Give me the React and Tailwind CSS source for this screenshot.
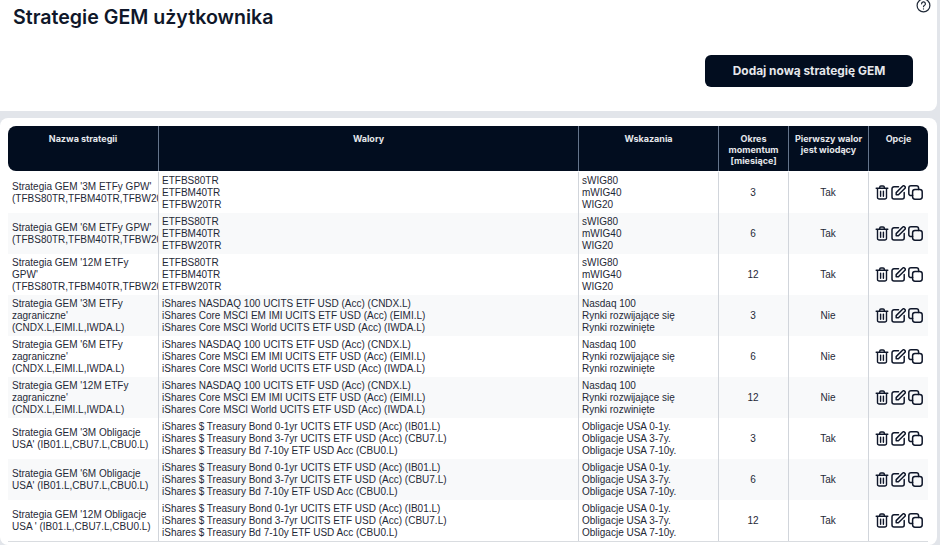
const gpw = ["ETFBS80TR", "ETFBM40TR", "ETFBW20TR"];
const gpwI = ["sWIG80", "mWIG40", "WIG20"];
const zag = ["iShares NASDAQ 100 UCITS ETF USD (Acc) (CNDX.L)", "iShares Core MSCI EM IMI UCITS ETF USD (Acc) (EIMI.L)", "iShares Core MSCI World UCITS ETF USD (Acc) (IWDA.L)"];
const zagI = ["Nasdaq 100", "Rynki rozwijające się", "Rynki rozwinięte"];
const obl = ["iShares $ Treasury Bond 0-1yr UCITS ETF USD (Acc) (IB01.L)", "iShares $ Treasury Bond 3-7yr UCITS ETF USD (Acc) (CBU7.L)", "iShares $ Treasury Bd 7-10y ETF USD Acc (CBU0.L)"];
const oblI = ["Obligacje USA 0-1y.", "Obligacje USA 3-7y.", "Obligacje USA 7-10y."];

const rows = [
  ["Strategia GEM '3M ETFy GPW' (TFBS80TR,TFBM40TR,TFBW20TR)", gpw, gpwI, 3, "Tak"],
  ["Strategia GEM '6M ETFy GPW' (TFBS80TR,TFBM40TR,TFBW20TR)", gpw, gpwI, 6, "Tak"],
  ["Strategia GEM '12M ETFy GPW' (TFBS80TR,TFBM40TR,TFBW20TR)", gpw, gpwI, 12, "Tak"],
  ["Strategia GEM '3M ETFy zagraniczne' (CNDX.L,EIMI.L,IWDA.L)", zag, zagI, 3, "Nie"],
  ["Strategia GEM '6M ETFy zagraniczne' (CNDX.L,EIMI.L,IWDA.L)", zag, zagI, 6, "Nie"],
  ["Strategia GEM '12M ETFy zagraniczne' (CNDX.L,EIMI.L,IWDA.L)", zag, zagI, 12, "Nie"],
  ["Strategia GEM '3M Obligacje USA' (IB01.L,CBU7.L,CBU0.L)", obl, oblI, 3, "Tak"],
  ["Strategia GEM '6M Obligacje USA' (IB01.L,CBU7.L,CBU0.L)", obl, oblI, 6, "Tak"],
  ["Strategia GEM '12M Obligacje USA ' (IB01.L,CBU7.L,CBU0.L)", obl, oblI, 12, "Tak"],
];

function Trash() {
  return (
    <svg width="14" height="15" viewBox="0 0 14 16" fill="none" stroke="#0f172a" strokeWidth="1.5" strokeLinecap="round" strokeLinejoin="round">
      <path d="M0.8 3.4h12.4M4.6 3.4V2.2a1.2 1.2 0 0 1 1.2-1.2h2.4a1.2 1.2 0 0 1 1.2 1.2v1.2M2.2 3.4v9.8A1.8 1.8 0 0 0 4 15h6a1.8 1.8 0 0 0 1.8-1.8V3.4M5.5 6.5v5.5M8.5 6.5v5.5" />
    </svg>
  );
}
function Edit() {
  return (
    <svg width="15" height="15" viewBox="0 0 15 15" fill="none" stroke="#0f172a" strokeWidth="1.5" strokeLinecap="round" strokeLinejoin="round">
      <path d="M7.5 1.8H3a2 2 0 0 0-2 2V12a2 2 0 0 0 2 2h8.2a2 2 0 0 0 2-2V7.5M5.2 7.6v2.2h2.2l6.6-6.6a1.1 1.1 0 0 0 0-1.6l-.6-.6a1.1 1.1 0 0 0-1.6 0z" />
    </svg>
  );
}
function Copy() {
  return (
    <svg width="15" height="15" viewBox="0 0 15 15" fill="none" stroke="#0f172a" strokeWidth="1.5" strokeLinecap="round" strokeLinejoin="round">
      <rect x="4.6" y="4.4" width="9.6" height="9.8" rx="2.4" />
      <path d="M4.6 10.6H3A2.2 2.2 0 0 1 .8 8.4V3A2.2 2.2 0 0 1 3 .8h5.4a2.2 2.2 0 0 1 2.2 2.2v1.4" />
    </svg>
  );
}

const th = "border-l border-[#64748b] px-1 pt-[6.5px] align-top font-bold text-[9px] leading-[11px] text-[#e5e7eb]";
const td = "border-l border-[#d1d5db] pl-[3px] pr-1 align-middle";

export default function App() {
  return (
    <div className="h-[545px] w-[940px] overflow-hidden bg-[#e2e5ea] font-['Liberation_Sans',sans-serif] text-[#1f2937]">
      <section className="relative flex h-[111px] w-[937px] flex-col rounded-br-lg bg-white pl-[13px] pr-6">
        <h1 className="mt-[4px] font-['Inter',sans-serif] text-[19.6px] font-semibold leading-[26px] text-[#0f172a]">Strategie GEM użytkownika</h1>
        <button className="ml-auto mt-[25px] h-[32px] w-[208px] rounded-md bg-[#020d1f] font-['Inter',sans-serif] text-[11.9px] font-bold text-[#e5e7eb]">Dodaj nową strategię GEM</button>
        <svg className="absolute right-[6px] top-[-2px]" width="15" height="15" viewBox="0 0 15 15" fill="none" stroke="#1f2937" strokeWidth="1.2" strokeLinecap="round">
          <circle cx="7.5" cy="7.5" r="6.4" />
          <path d="M5.6 5.8a1.9 1.9 0 1 1 2.7 1.7c-.5.3-.8.6-.8 1.2" />
          <path d="M7.5 10.8v.1" />
        </svg>
      </section>
      <section className="mt-[7px] h-[427px] w-[937px] rounded-lg bg-white pl-2 pt-2">
        <table className="w-[920px] table-fixed border-separate border-spacing-0 text-[10px] leading-[12px]">
          <colgroup>
            <col className="w-[150px]" />
            <col className="w-[420px]" />
            <col className="w-[140px]" />
            <col className="w-[70px]" />
            <col className="w-[80px]" />
            <col className="w-[60px]" />
          </colgroup>
          <thead>
            <tr className="h-[45px] bg-[#020d1f] font-['Inter',sans-serif]">
              <th className="rounded-l-lg px-1 pt-[6.5px] align-top text-[9px] font-bold leading-[11px] text-[#e5e7eb]">Nazwa strategii</th>
              <th className={th}>Walory</th>
              <th className={th}>Wskazania</th>
              <th className={th}>Okres momentum [miesiące]</th>
              <th className={th}>Pierwszy walor jest wiodący</th>
              <th className={`${th} rounded-r-lg`}>Opcje</th>
            </tr>
            <tr className="h-px"><td colSpan={6} className="h-px p-0" /></tr>
          </thead>
          <tbody>
            {rows.map((r, i) => (
              <tr key={i} className={`h-[41px] ${i % 2 ? "bg-[#f8f9fa]" : "bg-white"}`}>
                <td className="overflow-hidden pl-1 align-middle">
                  <div className="w-[141px]">{r[0]}</div>
                </td>
                <td className={`${td} pt-px`}>{r[1].map((l) => <div key={l}>{l}</div>)}</td>
                <td className={`${td} pt-px`}>{r[2].map((l) => <div key={l}>{l}</div>)}</td>
                <td className={`${td} text-center`}>{r[3]}</td>
                <td className={`${td} text-center`}>{r[4]}</td>
                <td className={td}>
                  <div className="flex items-center justify-center gap-[2px] pl-[1px]"><Trash /><Edit /><Copy /></div>
                </td>
              </tr>
            ))}
          </tbody>
        </table>
        <div className="h-px w-[920px] bg-[#d9dce0]" />
      </section>
    </div>
  );
}
